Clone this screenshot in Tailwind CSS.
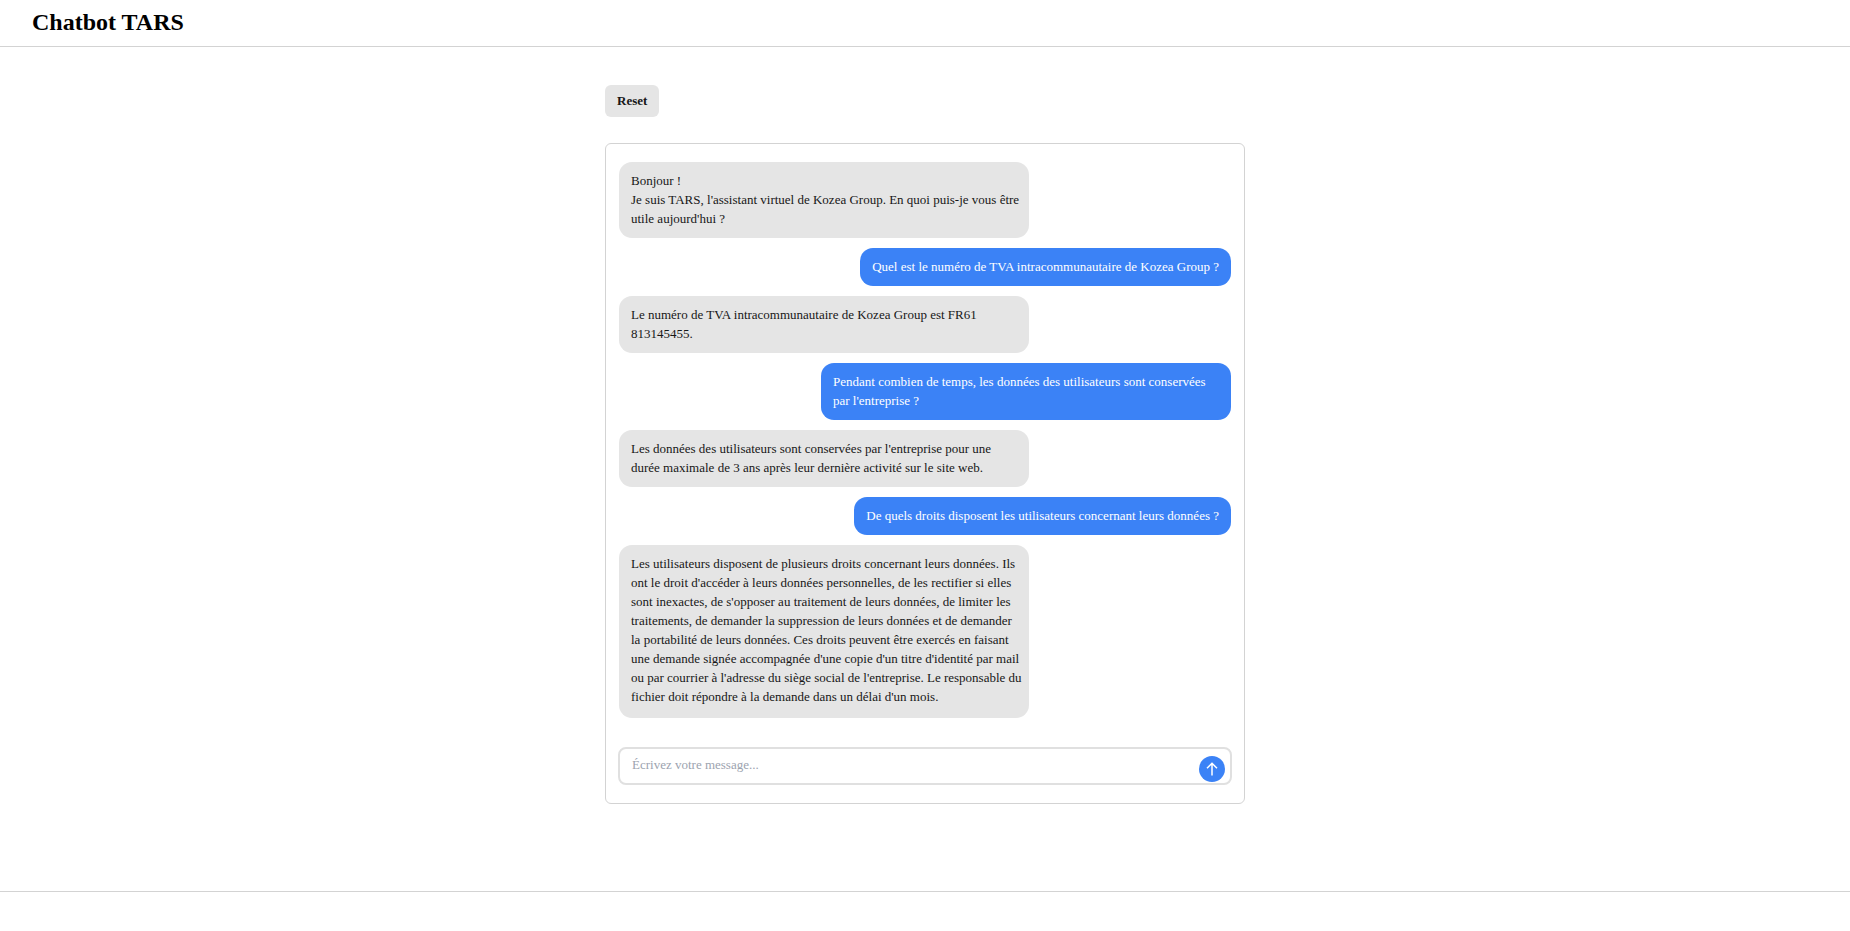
<!DOCTYPE html>
<html lang="fr">
<head>
<meta charset="utf-8">
<meta name="viewport" content="width=device-width, initial-scale=1">
<title>Chatbot TARS</title>
<script src="https://cdn.jsdelivr.net/npm/@tailwindcss/browser@4"></script>
</head>
<body class="flex min-h-screen flex-col bg-white font-['Liberation_Serif',serif] text-[13px] leading-[19px] text-neutral-900">
  <header class="border-b border-[#d3d3d3] px-8 pt-[6px] pb-2">
    <h1 class="text-2xl font-bold text-black">Chatbot TARS</h1>
  </header>

  <main class="mx-auto w-full max-w-[640px] grow pt-[38px]">
    <button type="button" class="block h-8 rounded-md bg-[#e5e5e5] px-3 pb-0.5 font-bold">Reset</button>

    <section class="mt-[26px] rounded-md border border-[#d3d3d3] px-3 pt-[18px] pb-[18px]">
      <div class="flex flex-col items-start gap-[10px] px-px">
        <p class="max-w-[410px] rounded-[13px] bg-[#e5e5e5] pt-[9px] pr-[7px] pb-[10px] pl-3">Bonjour !<br>Je suis TARS, l'assistant virtuel de Kozea Group. En quoi puis-je vous être utile aujourd'hui ?</p>
        <p class="max-w-[410px] self-end rounded-[13px] bg-[#3b82f6] px-3 pt-[9px] pb-[10px] text-white">Quel est le numéro de TVA intracommunautaire de Kozea Group ?</p>
        <p class="max-w-[410px] rounded-[13px] bg-[#e5e5e5] pt-[9px] pr-[7px] pb-[10px] pl-3">Le numéro de TVA intracommunautaire de Kozea Group est FR61 813145455.</p>
        <p class="max-w-[410px] self-end rounded-[13px] bg-[#3b82f6] px-3 pt-[9px] pb-[10px] text-white">Pendant combien de temps, les données des utilisateurs sont conservées par l'entreprise ?</p>
        <p class="max-w-[410px] rounded-[13px] bg-[#e5e5e5] pt-[9px] pr-[7px] pb-[10px] pl-3">Les données des utilisateurs sont conservées par l'entreprise pour une durée maximale de 3 ans après leur dernière activité sur le site web.</p>
        <p class="max-w-[410px] self-end rounded-[13px] bg-[#3b82f6] px-3 pt-[9px] pb-[10px] text-white">De quels droits disposent les utilisateurs concernant leurs données ?</p>
        <p class="max-w-[410px] rounded-[13px] bg-[#e5e5e5] pt-[9px] pr-[7px] pb-3 pl-3">Les utilisateurs disposent de plusieurs droits concernant leurs données. Ils ont le droit d'accéder à leurs données personnelles, de les rectifier si elles sont inexactes, de s'opposer au traitement de leurs données, de limiter les traitements, de demander la suppression de leurs données et de demander la portabilité de leurs données. Ces droits peuvent être exercés en faisant une demande signée accompagnée d'une copie d'un titre d'identité par mail ou par courrier à l'adresse du siège social de l'entreprise. Le responsable du fichier doit répondre à la demande dans un délai d'un mois.</p>
      </div>

      <form class="mt-[29px] flex h-[38px] items-end rounded-lg border-2 border-[#e0e0e0] pr-[5px]">
        <textarea rows="1" aria-label="Votre message" placeholder="Écrivez votre message..." class="h-full grow resize-none overflow-hidden bg-transparent px-3 pt-[6px] outline-none placeholder:text-[#9ca3af]"></textarea>
        <button type="submit" aria-label="Envoyer" class="mb-px flex size-[26px] shrink-0 items-center justify-center rounded-full bg-[#3b82f6] text-white">
          <svg class="size-4" viewBox="0 0 16 16" fill="none" stroke="currentColor" stroke-width="1.5" aria-hidden="true"><path d="M8 14.4V2.2M3 7.2L8 2.2l5 5"/></svg>
        </button>
      </form>
    </section>
  </main>

  <footer class="h-10 border-t border-[#d3d3d3]"></footer>
</body>
</html>
